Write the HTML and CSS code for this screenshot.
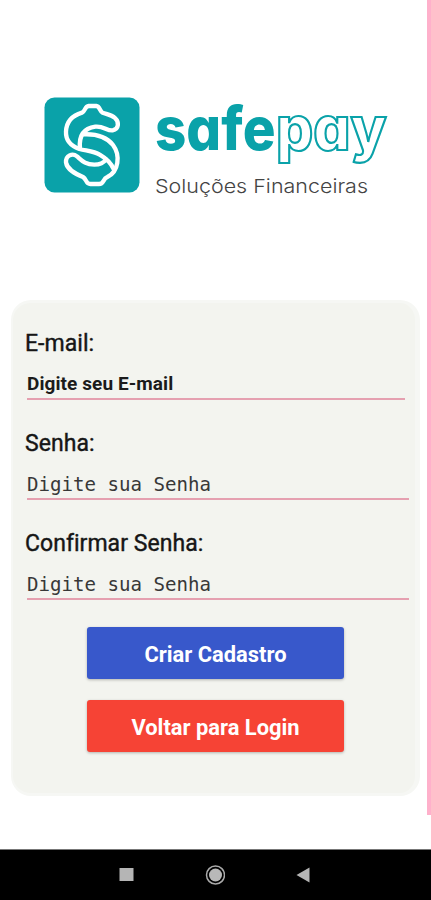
FILE: index.html
```html
<!DOCTYPE html>
<html lang="pt-BR">
<head>
<meta charset="utf-8">
<title>Safepay</title>
<link rel="stylesheet" href="styles.css">
</head>
<body>
<div class="screen">
  <main class="content">
    <svg class="logo" viewBox="0 0 431 120" role="img" aria-label="safepay">
      <rect x="44.5" y="12.5" width="95" height="95" rx="10" fill="#0aa2a9"/>
      <g transform="translate(35 0) scale(.33333)" fill="none" stroke="#fff" stroke-width="13" stroke-linecap="round" stroke-linejoin="round">
        <path d="M135 190C131 152 147 130 181 125C205 122 216 138 233 136C252 133 253 111 240 99C229 89 217 88 203 83C194 79 195 64 184 63H161C149 64 151 79 141 83C111 92 94 112 93 140C92 165 108 183 133 192C158 198 178 199 194 209C213 220 228 235 236 252"/>
        <path d="M145 148C185 146 215 156 234 180C257 211 251 260 217 276C202 282 208 297 192 297H166C152 297 155 282 144 276C121 266 96 254 93 232C92 211 112 203 126 214C141 227 151 239 178 239C195 239 207 232 213 223"/>
      </g>
      <text class="wordmark" x="155" y="64.500" textLength="120.500" lengthAdjust="spacingAndGlyphs">safe</text>
      <text class="wordmark outlined" x="276" y="64.500" textLength="110.500" lengthAdjust="spacingAndGlyphs">pay</text>
      <text class="tagline" x="155" y="107.500" textLength="213" lengthAdjust="spacingAndGlyphs">Soluções Financeiras</text>
    </svg>
    <form class="card">
      <label class="field"><span class="label">E-mail:</span><input class="input email" type="text" placeholder="Digite seu E-mail"></label>
      <label class="field"><span class="label">Senha:</span><input class="input" type="password" placeholder="Digite sua Senha"></label>
      <label class="field"><span class="label">Confirmar Senha:</span><input class="input" type="password" placeholder="Digite sua Senha"></label>
      <div class="actions">
        <button class="button" type="button">Criar Cadastro</button>
        <button class="button back" type="button">Voltar para Login</button>
      </div>
    </form>
  </main>
  <nav class="navbar">
    <svg viewBox="0 0 20 20"><path d="M3.500 3h14v13h-14z" fill="#b5b5b5"/></svg>
    <svg viewBox="0 0 20 20"><circle cx="10.500" cy="10" r="9" fill="none" stroke="#aaa" stroke-width="1.500"/><circle cx="10.500" cy="10" r="6.500" fill="#b8b8b8"/></svg>
    <svg viewBox="0 0 20 20"><path d="M2.500 10L15.500 2.500V17.500z" fill="#b5b5b5"/></svg>
  </nav>
</div>
</body>
</html>
```
FILE: styles.css
```css
* { box-sizing: border-box; }
body { margin: 0; background: #fff; font-family: Roboto, sans-serif; }
.screen { height: 900px; display: flex; flex-direction: column; overflow: hidden; }
.content {
  height: 815px;
  padding: 85px 7px 0 11px;
  border-right: 4px solid #ffb0cb;
}
.logo { display: block; width: 431px; height: 120px; margin-left: -11px; }
.wordmark { font: 800 60px Inter, sans-serif; font-feature-settings: "cv11"; fill: #0aa2a9; }
.outlined { font-size: 61px; fill: #fff; stroke: #0aa2a9; stroke-width: 2.2; }
.tagline { font: 300 19px Inter, sans-serif; fill: #444; }
.card {
  height: 496px;
  margin-top: 95px;
  padding: 28px 11px 0 14px;
  border-radius: 20px;
  background: #f3f4ef;
  border: 2px solid #f6f7f4;
  border-width: 3px 5px 3px 2px;
}
.field { display: block; height: 100px; }
.label {
  display: block;
  height: 26px;
  margin-left: -2px;
  font-size: 23px;
  line-height: 26px;
  color: #161616;
  letter-spacing: .04px;
  -webkit-text-stroke: .4px #161616;
}
.input {
  display: block;
  width: 382px;
  height: 43px;
  padding: 13px 0 0;
  border: 0;
  border-bottom: 2px solid #e5a0b0;
  background: transparent;
  outline: 0;
  font: 19.100px "DejaVu Sans Mono", monospace;
}
.input::placeholder { color: #383838; opacity: 1; }
.email { width: 378px; padding-top: 12px; font: 700 19px Roboto, sans-serif; letter-spacing: .08px; }
.email::placeholder { color: #1b1b1b; }
.actions { display: grid; gap: 21px; width: 257px; margin: -4px 0 0 60px; }
.button {
  height: 52px;
  padding: 2px 0 0;
  border: 0;
  border-radius: 3px;
  background: #3858cb;
  color: #fff;
  font: 700 21.900px Roboto, sans-serif;
  box-shadow: 0 1px 3px #0004;
}
.back { background: #f64335; }
.navbar {
  height: 51px;
  margin-top: auto;
  padding-left: 116px;
  display: flex;
  align-items: center;
  gap: 69px;
  background: #000;
  border-top: 1px solid #777;
}
.navbar svg { width: 20px; height: 20px; }
```
